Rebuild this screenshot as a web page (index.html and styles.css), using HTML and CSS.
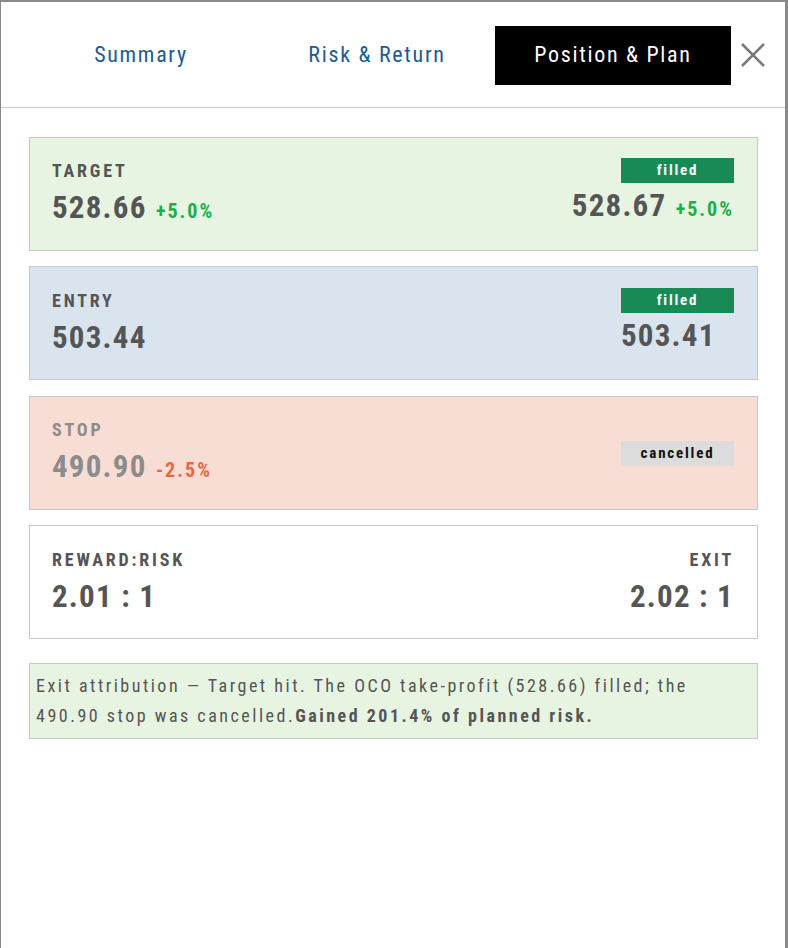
FILE: index.html
```html
<!DOCTYPE html>
<html>
<head>
  <meta charset="UTF-8">
  <link rel="stylesheet" href="styles.css">
</head>
<body>
  <div class="modal">
    <div class="modal-header">
      <div class="modal-tabs">
        <button class="tab-button">Summary</button>
        <button class="tab-button">Risk &amp; Return</button>
        <button class="tab-button active">Position &amp; Plan</button>
      </div>
      <button class="close-button" aria-label="Close">
        <svg width="26" height="26" viewBox="0 0 26 26">
          <path d="M2 2 L24 24 M24 2 L2 24" stroke="#7a7a7a" stroke-width="2.6" fill="none"/>
        </svg>
      </button>
    </div>

    <div class="modal-body">
      <div class="plan-card target">
        <div class="plan-col">
          <div class="plan-label">TARGET</div>
          <div class="plan-value">528.66 <span class="pct up">+5.0%</span></div>
        </div>
        <div class="plan-col right filled-col">
          <span class="badge filled">filled</span>
          <div class="plan-value">528.67 <span class="pct up">+5.0%</span></div>
        </div>
      </div>

      <div class="plan-card entry">
        <div class="plan-col">
          <div class="plan-label">ENTRY</div>
          <div class="plan-value">503.44</div>
        </div>
        <div class="plan-col right filled-col">
          <span class="badge filled">filled</span>
          <div class="plan-value">503.41</div>
        </div>
      </div>

      <div class="plan-card stop muted">
        <div class="plan-col">
          <div class="plan-label">STOP</div>
          <div class="plan-value">490.90 <span class="pct down">-2.5%</span></div>
        </div>
        <div class="plan-col right">
          <span class="badge cancelled">cancelled</span>
        </div>
      </div>

      <div class="plan-card ratio">
        <div class="plan-col">
          <div class="plan-label">REWARD:RISK</div>
          <div class="plan-value">2.01 : 1</div>
        </div>
        <div class="plan-col right">
          <div class="plan-label">EXIT</div>
          <div class="plan-value end">2.02 : 1</div>
        </div>
      </div>

      <div class="exit-note">
        Exit attribution — Target hit. The OCO take-profit (528.66) filled; the 490.90 stop was cancelled.<strong>Gained 201.4% of planned risk.</strong>
      </div>
    </div>
  </div>
</body>
</html>
```

FILE: styles.css
```css
body {
  margin: 0;
  background: #8a8a8a;
  font-family: "Roboto Condensed", Roboto, sans-serif;
  font-stretch: 80%;
  color: #555555;
}

.modal {
  width: 784px;
  height: 946px;
  margin: 2px 0 0 1px;
  background: #ffffff;
}

.modal-header {
  display: flex;
  align-items: center;
  height: 105px;
  padding-left: 22px;
  border-bottom: 1px solid #c8c8c8;
}

.modal-tabs {
  display: flex;
  padding-top: 2px;
}

.tab-button {
  width: 236px;
  height: 59px;
  padding: 0 0 2px;
  background: transparent;
  border: none;
  font-family: inherit;
  font-stretch: inherit;
  font-size: 22px;
  letter-spacing: 1.7px;
  color: #1d5a96;
  cursor: pointer;
}

.tab-button.active {
  background: #000000;
  color: #ffffff;
}

.close-button {
  display: flex;
  align-items: center;
  justify-content: center;
  width: 44px;
  height: 44px;
  padding: 0;
  background: transparent;
  border: none;
  cursor: pointer;
}

.modal-body {
  display: flex;
  flex-direction: column;
  gap: 15px;
  padding: 29px 27px 0 28px;
}

.plan-card {
  display: flex;
  justify-content: space-between;
  align-items: center;
  height: 114px;
  box-sizing: border-box;
  padding: 0 23px 0 22px;
  border: 1px solid #c8c8c8;
}

.plan-card.target { background: #e6f4e1; }
.plan-card.entry { background: #d9e4ef; }
.plan-card.stop { background: #f8ddd4; margin-top: 1px; }
.plan-card.ratio { background: #ffffff; }

.plan-col {
  display: flex;
  flex-direction: column;
  gap: 8px;
}

.plan-col.right {
  align-items: flex-end;
  gap: 5px;
}

.plan-col.filled-col {
  padding-bottom: 4px;
}

.plan-col.right .plan-value {
  align-self: flex-start;
}

.plan-col.right .plan-label {
  margin-bottom: 3px;
}

.plan-col.right .plan-value.end {
  align-self: flex-end;
}

.plan-label {
  font-size: 18px;
  line-height: 22px;
  font-weight: 700;
  letter-spacing: 2.8px;
}

.plan-value {
  font-size: 31px;
  line-height: 36px;
  font-weight: 700;
  letter-spacing: 1.2px;
}

.pct {
  font-size: 20px;
  letter-spacing: 2px;
  margin-left: 1px;
}

.pct.up { color: #19b04b; }
.pct.down { color: #e8693f; }

.muted .plan-label,
.muted .plan-value {
  color: #8c8c8c;
}

.badge {
  display: block;
  width: 113px;
  height: 25px;
  line-height: 25px;
  text-align: center;
  font-size: 15px;
  font-weight: 700;
  letter-spacing: 1.8px;
}

.badge.filled {
  background: #178a55;
  color: #ffffff;
}

.badge.cancelled {
  background: #dcdcdc;
  color: #111111;
}

.exit-note {
  margin-top: 9px;
  padding: 7px 14px 7px 6px;
  background: #e6f4e1;
  border: 1px solid #c8c8c8;
  font-size: 18px;
  line-height: 30px;
  letter-spacing: 2.5px;
}

.exit-note strong {
  font-weight: 700;
}
```
